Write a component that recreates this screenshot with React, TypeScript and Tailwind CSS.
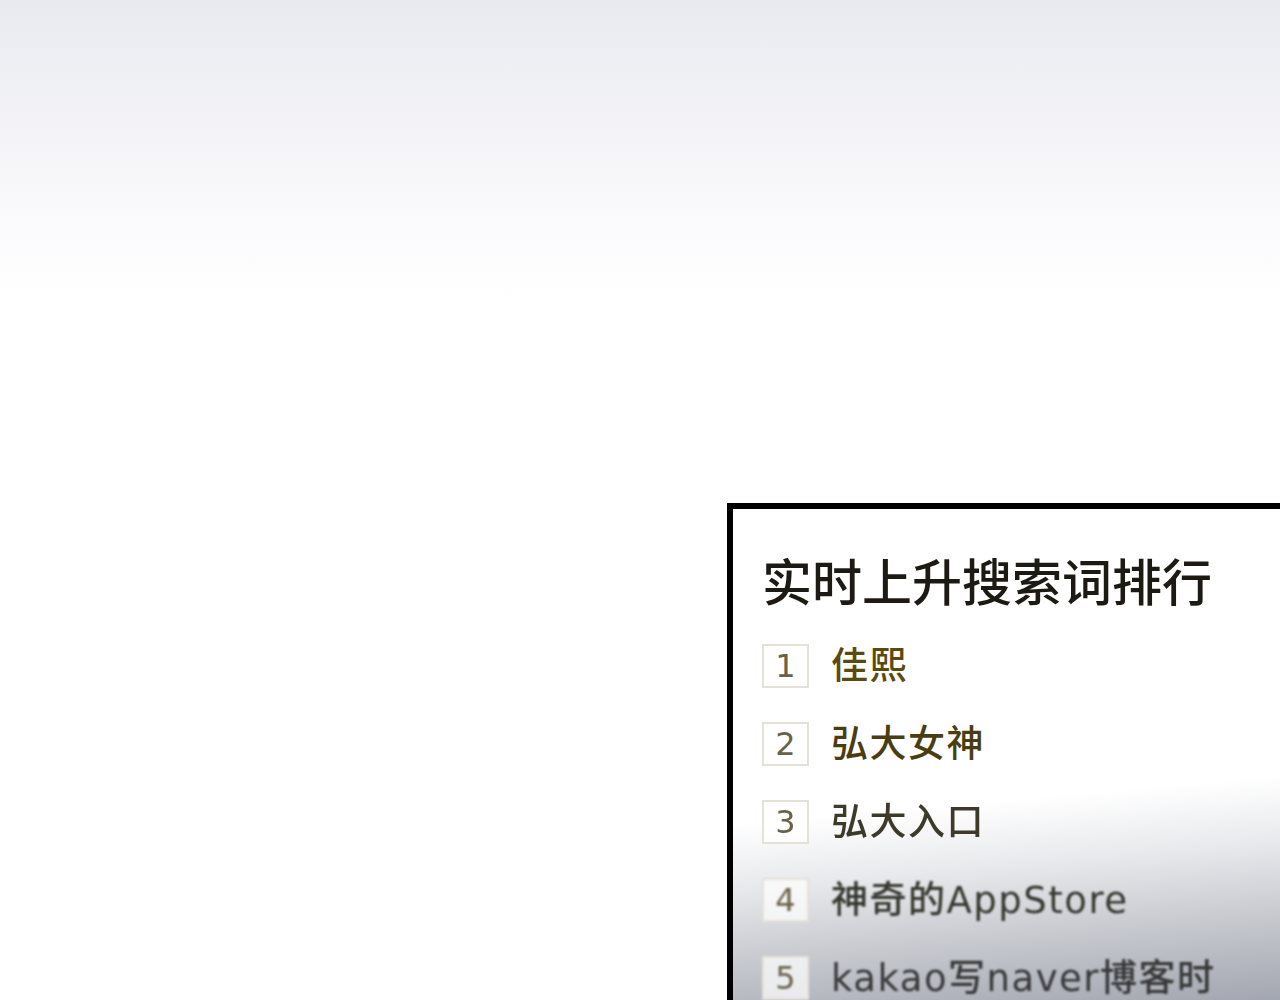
const items = [
  { n: "1", text: "佳熙", color: "text-[#5a4a0e]", extra: "" },
  { n: "2", text: "弘大女神", color: "text-[#4a3d12]", extra: "" },
  { n: "3", text: "弘大入口", color: "text-[#3e3a2a]", extra: "blur-[0.4px]" },
  { n: "4", text: "神奇的AppStore", color: "text-[#36362e]", extra: "blur-[0.8px]" },
  { n: "5", text: "kakao写naver博客时", color: "text-[#383838]", extra: "blur-[1px]" },
];

export default function App() {
  return (
    <div className="w-[1280px] h-[1000px] overflow-hidden flex flex-col bg-[linear-gradient(180deg,#e9eaef_0px,#f3f3f7_120px,#fbfbfd_230px,#ffffff_300px)] font-['Noto_Sans_CJK_SC',sans-serif]">
      <div className="mt-[503px] ml-[727px] w-[600px] h-[497px] border-t-[6px] border-l-[6px] border-black bg-[linear-gradient(175deg,#ffffff_58%,#e8e9ec_70%,#c6c8ce_84%,#a1a5af_100%)] pl-[29px] pt-[45px]">
        <h1 className="text-[50px] leading-[50px] text-[#1c1a12] font-medium whitespace-nowrap">
          实时上升搜索词排行
        </h1>
        <ul className="mt-[23px] flex flex-col">
          {items.map((it) => (
            <li key={it.n} className={`h-[78px] flex items-center gap-[22px] ${it.extra}`}>
              <span className="w-[47px] h-[44px] shrink-0 border-2 border-[#e4e1d6] bg-white/70 flex items-center justify-center text-[32px] leading-none text-[#6a6248] font-['DejaVu_Sans',sans-serif]">
                {it.n}
              </span>
              <span className={`text-[37px] leading-none font-medium whitespace-nowrap tracking-[1.5px] font-['DejaVu_Sans','Noto_Sans_CJK_SC',sans-serif] ${it.color}`}>
                {it.text}
              </span>
            </li>
          ))}
        </ul>
      </div>
    </div>
  );
}
